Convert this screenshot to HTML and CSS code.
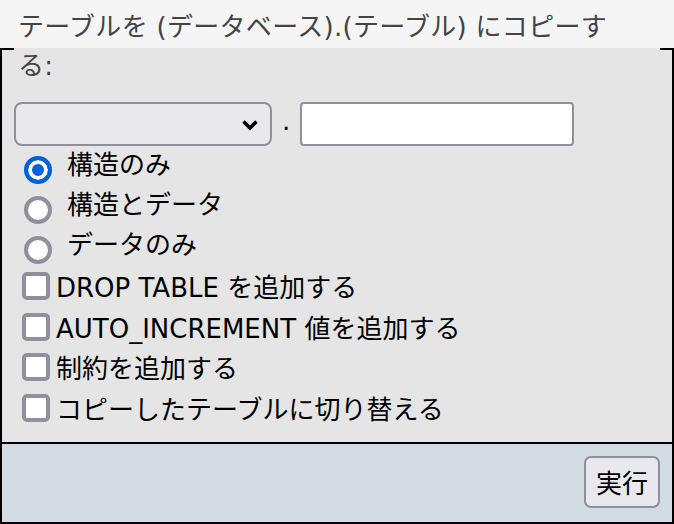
FILE: index.html
```html
<!DOCTYPE html>
<html lang="ja">
<head>
<meta charset="utf-8">
<title>テーブルをコピー</title>
<link rel="stylesheet" href="styles.css">
</head>
<body>
<form class="copy-form">
  <fieldset class="panel">
    <legend class="panel-title">テーブルを (データベース).(テーブル) にコピーする:</legend>
    <div class="target-row">
      <div class="select-wrap">
        <select class="db-select"><option></option></select>
        <svg class="chevron" width="18" height="12" viewBox="0 0 18 12" aria-hidden="true"><polyline points="2.5,2.5 9,9 15.5,2.5" fill="none" stroke="#000" stroke-width="3.6" stroke-linecap="butt" stroke-linejoin="miter"/></svg>
      </div>
      <span class="dot">.</span>
      <input type="text" class="table-input">
    </div>
    <div class="radio-group">
      <label class="radio-row"><input type="radio" name="what" class="radio" checked><span class="radio-label">構造のみ</span></label>
      <label class="radio-row"><input type="radio" name="what" class="radio"><span class="radio-label">構造とデータ</span></label>
      <label class="radio-row"><input type="radio" name="what" class="radio"><span class="radio-label">データのみ</span></label>
    </div>
    <div class="check-group">
      <label class="check-row"><input type="checkbox" class="check"><span class="check-label">DROP TABLE を追加する</span></label>
      <label class="check-row"><input type="checkbox" class="check"><span class="check-label">AUTO_INCREMENT 値を追加する</span></label>
      <label class="check-row"><input type="checkbox" class="check"><span class="check-label">制約を追加する</span></label>
      <label class="check-row"><input type="checkbox" class="check"><span class="check-label">コピーしたテーブルに切り替える</span></label>
    </div>
  </fieldset>
  <div class="panel-footer">
    <button type="submit" class="submit-btn">実行</button>
  </div>
</form>
</body>
</html>
```
FILE: styles.css
```css
* {
  box-sizing: border-box;
}

html, body {
  margin: 0;
  padding: 0;
}

body {
  background: #f5f5f5;
  font-family: "DejaVu Sans", "Noto Sans CJK JP", sans-serif;
  font-size: 26px;
  color: #000;
}

.copy-form {
  margin: 0;
}

.panel {
  margin: 6px 0 0 0;
  min-width: 0;
  padding: 10px 12px 14px 12px;
  border: 2px solid #000;
  background: #e5e5e5;
}

.panel-title {
  padding: 2px 27px 6px 4px;
  line-height: 39px;
  color: #444;
  letter-spacing: 0.3px;
}

.target-row {
  display: flex;
  align-items: center;
  height: 44px;
}

.select-wrap {
  position: relative;
  width: 258px;
  height: 44px;
}

.db-select {
  appearance: none;
  -webkit-appearance: none;
  width: 100%;
  height: 44px;
  margin: 0;
  border: 2px solid #8f8f9d;
  border-radius: 8px;
  background: #e9e9ed;
  font: inherit;
}

.chevron {
  position: absolute;
  right: 13px;
  top: 17px;
  pointer-events: none;
}

.dot {
  align-self: flex-start;
  margin: 6px 10px 0 10px;
  line-height: 26px;
}

.table-input {
  appearance: none;
  -webkit-appearance: none;
  width: 274px;
  height: 44px;
  margin: 0;
  border: 2px solid #8f8f9d;
  border-radius: 4px;
  background: #fff;
  font: inherit;
}

.radio-group {
  display: grid;
  grid-template-rows: 40px 40px 36px;
  margin-top: 4px;
}

.radio-row {
  display: flex;
  align-items: flex-start;
}

.radio {
  appearance: none;
  -webkit-appearance: none;
  flex: none;
  width: 28px;
  height: 28px;
  margin: 6px 0 0 10px;
  border: 4px solid #8f8f9d;
  border-radius: 50%;
  background: #fff;
}

.radio:checked {
  border-color: #0060df;
  background: #0060df;
  box-shadow: inset 0 0 0 4px #fff;
}

.radio-label {
  margin-left: 15px;
  padding-top: 2px;
  line-height: 26px;
}

.check-group {
  display: grid;
  grid-auto-rows: 40.5px;
}

.check-row {
  display: flex;
  align-items: center;
}

.check {
  appearance: none;
  -webkit-appearance: none;
  flex: none;
  width: 28px;
  height: 28px;
  margin: 0 0 0 8px;
  border: 4px solid #8f8f9d;
  border-radius: 5px;
  background: #fff;
}

.check-label {
  margin-left: 6px;
  padding-top: 4px;
  line-height: 28px;
}

.panel-footer {
  display: flex;
  justify-content: flex-end;
  padding: 12px 12px 14px 12px;
  border: 2px solid #000;
  border-top: 0;
  background: #d3dce3;
}

.submit-btn {
  height: 52px;
  margin: 0;
  padding: 4px 10px 0 10px;
  border: 2px solid #8f8f9d;
  border-radius: 7px;
  background: #e9e9ed;
  font: inherit;
  line-height: 44px;
  color: #000;
}
```
